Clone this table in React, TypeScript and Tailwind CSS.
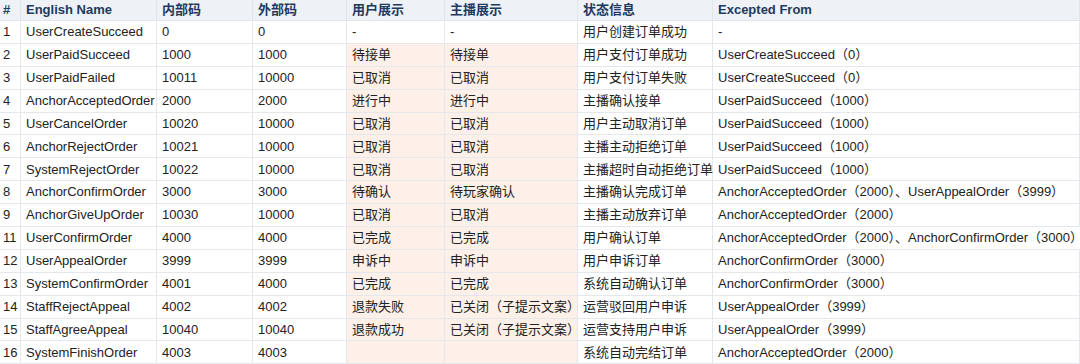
const headers = ['#', 'English Name', '内部码', '外部码', '用户展示', '主播展示', '状态信息', 'Excepted From'];

const rows: string[][] = [
  ['1', 'UserCreateSucceed', '0', '0', '-', '-', '用户创建订单成功', '-'],
  ['2', 'UserPaidSucceed', '1000', '1000', '待接单', '待接单', '用户支付订单成功', 'UserCreateSucceed（0）'],
  ['3', 'UserPaidFailed', '10011', '10000', '已取消', '已取消', '用户支付订单失败', 'UserCreateSucceed（0）'],
  ['4', 'AnchorAcceptedOrder', '2000', '2000', '进行中', '进行中', '主播确认接单', 'UserPaidSucceed（1000）'],
  ['5', 'UserCancelOrder', '10020', '10000', '已取消', '已取消', '用户主动取消订单', 'UserPaidSucceed（1000）'],
  ['6', 'AnchorRejectOrder', '10021', '10000', '已取消', '已取消', '主播主动拒绝订单', 'UserPaidSucceed（1000）'],
  ['7', 'SystemRejectOrder', '10022', '10000', '已取消', '已取消', '主播超时自动拒绝订单', 'UserPaidSucceed（1000）'],
  ['8', 'AnchorConfirmOrder', '3000', '3000', '待确认', '待玩家确认', '主播确认完成订单', 'AnchorAcceptedOrder（2000）、UserAppealOrder（3999）'],
  ['9', 'AnchorGiveUpOrder', '10030', '10000', '已取消', '已取消', '主播主动放弃订单', 'AnchorAcceptedOrder（2000）'],
  ['11', 'UserConfirmOrder', '4000', '4000', '已完成', '已完成', '用户确认订单', 'AnchorAcceptedOrder（2000）、AnchorConfirmOrder（3000）'],
  ['12', 'UserAppealOrder', '3999', '3999', '申诉中', '申诉中', '用户申诉订单', 'AnchorConfirmOrder（3000）'],
  ['13', 'SystemConfirmOrder', '4001', '4000', '已完成', '已完成', '系统自动确认订单', 'AnchorConfirmOrder（3000）'],
  ['14', 'StaffRejectAppeal', '4002', '4002', '退款失败', '已关闭（子提示文案）', '运营驳回用户申诉', 'UserAppealOrder（3999）'],
  ['15', 'StaffAgreeAppeal', '10040', '10040', '退款成功', '已关闭（子提示文案）', '运营支持用户申诉', 'UserAppealOrder（3999）'],
  ['16', 'SystemFinishOrder', '4003', '4003', '', '', '系统自动完结订单', 'AnchorAcceptedOrder（2000）'],
];

const grid = 'grid grid-cols-[21px_136px_96px_94px_98px_133px_135px_1fr]';

export default function App() {
  return (
    <div
      className="flex h-[364px] w-[1080px] flex-col overflow-hidden bg-white text-[13px] text-[#222]"
      style={{ fontFamily: '"Liberation Sans", "Noto Sans CJK SC", sans-serif' }}
    >
      <div className={grid + ' h-[21px] shrink-0 bg-[#eef1f5]'}>
        {headers.map((h, j) => (
          <div
            key={h}
            className={
              'flex items-center border-r border-b border-[#e2e6eb] font-bold text-[#1d3a5f] ' +
              (j === 0 ? 'pl-[3px]' : 'px-[5px]')
            }
          >
            {h}
          </div>
        ))}
      </div>
      {rows.map((r, i) => (
        <div key={r[0]} className={grid + ' h-[22.9px] shrink-0'}>
          {r.map((cell, j) => {
            const pink = i > 0 && (j === 4 || j === 5);
            return (
              <div
                key={j}
                className={
                  'flex items-center whitespace-nowrap border-r border-b border-[#e4e7eb] ' +
                  (j === 0 ? 'pl-[3px] ' : 'px-[5px] ') +
                  (pink ? 'bg-[#fcf0e8]' : 'bg-white')
                }
              >
                {cell}
              </div>
            );
          })}
        </div>
      ))}
    </div>
  );
}
